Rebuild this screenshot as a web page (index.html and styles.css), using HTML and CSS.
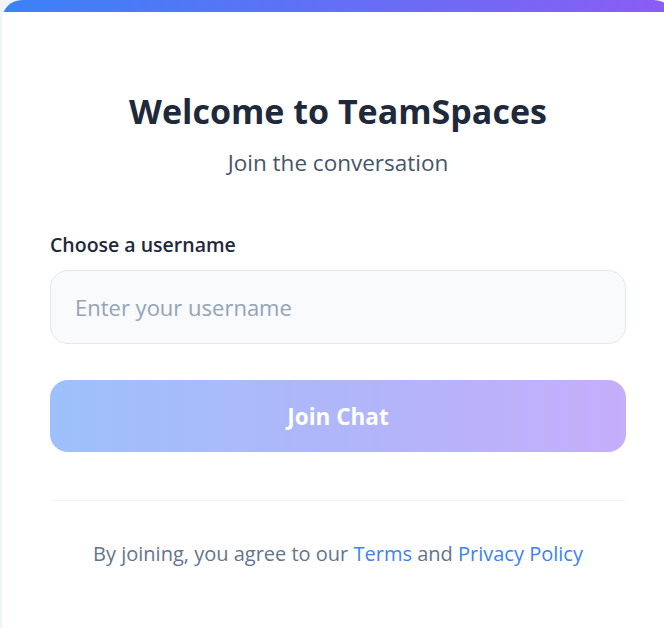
FILE: index.html
```html
<!DOCTYPE html>
<html lang="en">
<head>
<meta charset="utf-8">
<title>TeamSpaces</title>
<link rel="stylesheet" href="styles.css">
</head>
<body>
<div class="page">
  <div class="card">
    <div class="card-bar"></div>
    <div class="card-body">
      <h1 class="title">Welcome to TeamSpaces</h1>
      <p class="subtitle">Join the conversation</p>
      <form class="form">
        <label class="label" for="username">Choose a username</label>
        <input class="input" id="username" type="text" placeholder="Enter your username">
        <button class="btn" type="button" disabled>Join Chat</button>
      </form>
      <div class="divider"></div>
      <p class="footer">By joining, you agree to our <a href="#">Terms</a> and <a href="#">Privacy Policy</a></p>
    </div>
  </div>
</div>
</body>
</html>
```
FILE: styles.css
```css
* { box-sizing: border-box; }
html, body { margin: 0; padding: 0; }
body {
  background: #f1f5f9;
  font-family: "Open Sans", "Noto Sans", sans-serif;
}
.page {
  width: 664px;
  height: 628px;
  padding-left: 2px;
  overflow: hidden;
}
.card {
  width: 672px;
  height: 640px;
  background: #ffffff;
  border-radius: 20px 20px 0 0;
  overflow: hidden;
}
.card-bar {
  height: 12px;
  background: linear-gradient(90deg, #3b82f6, #8b5cf6);
}
.card-body {
  padding: 77px 48px 0 48px;
}
.title {
  margin: 0;
  text-align: center;
  font-size: 34px;
  line-height: 44px;
  font-weight: 700;
  color: #1e293b;
}
.subtitle {
  margin: 15px 0 0;
  text-align: center;
  font-size: 22.5px;
  line-height: 30px;
  color: #475569;
}
.form {
  display: flex;
  flex-direction: column;
  margin-top: 54px;
}
.label {
  font-size: 19.5px;
  line-height: 26px;
  font-weight: 600;
  color: #1e293b;
}
.input {
  margin-top: 12px;
  height: 74px;
  border: 1px solid #e2e8f0;
  border-radius: 18px;
  background: #f8fafc;
  padding: 0 24px;
  font-family: inherit;
  font-size: 22px;
  color: #1e293b;
  outline: none;
}
.input::placeholder { color: #94a3b8; }
.btn {
  margin-top: 36px;
  height: 72px;
  border: none;
  border-radius: 18px;
  background: linear-gradient(90deg, #3b82f6, #8b5cf6);
  opacity: 0.5;
  color: #ffffff;
  font-family: inherit;
  font-size: 22.5px;
  font-weight: 700;
}
.divider {
  margin-top: 48px;
  height: 1px;
  background: #f1f5f9;
}
.footer {
  margin: 38px 0 0;
  text-align: center;
  font-size: 20px;
  line-height: 30px;
  color: #64748b;
}
.footer a {
  color: #3b82f6;
  text-decoration: none;
}
```
